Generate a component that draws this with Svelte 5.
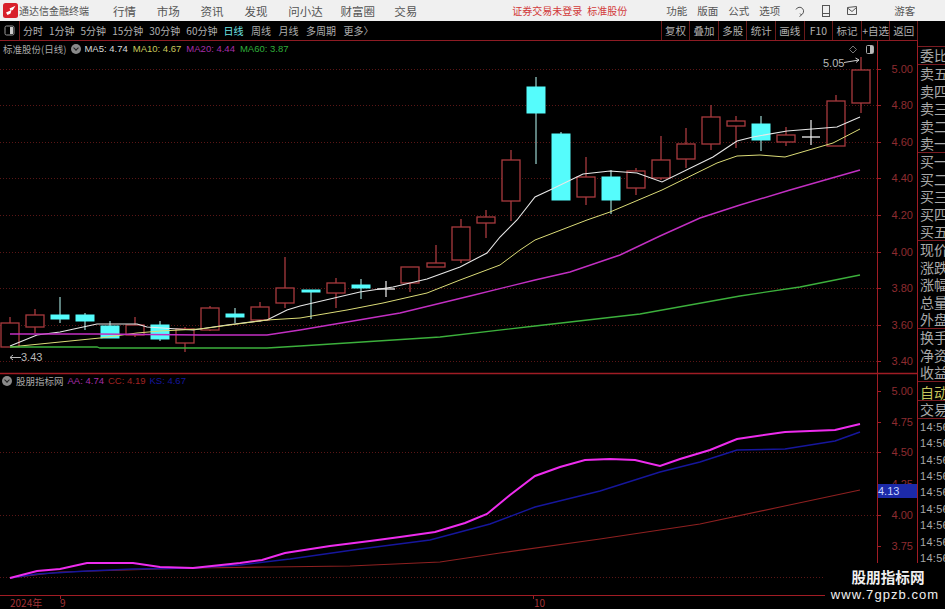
<script>
  const menu = ['行情','市场','资讯','发现','问小达','财富圈','交易'];
  const tools = ['功能','版面','公式','选项'];
  const periods = ['分时','1分钟','5分钟','15分钟','30分钟','60分钟','日线','周线','月线','多周期','更多〉'];
  const actions = ['复权','叠加','多股','统计','画线','F10','标记','+自选','返回'];

  // x, bodyTop, bodyBottom, wickTop, wickBottom, kind (r=hollow red, c=cyan, w=cross)
  const candles = [
    [10,323,347,317,347,'r'],[35,315,327,309,333,'r'],[60,315,319,297,323,'c'],[85,315,321,313,330,'c'],
    [110,326,338,321,338,'c'],[135,325,335,317,337,'r'],[160,325,339,321,341,'c'],[185,329,343,327,352,'r'],
    [210,308,330,306,331,'r'],[235,314,317,308,323,'c'],[260,307,320,302,322,'r'],[285,288,303,257,308,'r'],
    [311,290,292,290,319,'c'],[336,283,293,278,308,'r'],[361,285,288,279,299,'c'],[386,289,289,281,297,'w'],
    [410,267,283,267,292,'r'],[436,263,267,245,267,'r'],[461,227,260,219,263,'r'],[486,217,223,210,238,'r'],
    [511,160,201,150,221,'r'],[536,87,113,77,164,'c'],[561,134,200,132,200,'c'],[586,177,197,157,205,'r'],
    [611,177,200,170,214,'c'],[636,171,188,168,195,'r'],[661,160,178,136,180,'r'],[686,144,159,128,168,'r'],
    [711,117,144,105,150,'r'],[736,121,126,116,148,'r'],[761,124,140,116,151,'c'],[786,135,142,127,146,'r'],
    [811,137,137,120,145,'w'],[836,101,146,95,146,'r'],[861,70,103,57,113,'r']
  ];

  const lines = [
    ['#e8e8e8',1.1,'10,346 37,335 60,332 97,324 137,324 147,327 193,330 227,325 267,320 287,310 300,306 360,292 393,287 427,279 460,267 487,253 500,237 517,220 535,197 550,190 583,174 610,171 637,173 662,182 713,157 737,141 753,137 787,131 837,127 860,117'],
    ['#dcdc78',1,'10,347 60,342 100,338 137,333 160,331 200,329 267,320 300,318 347,310 383,303 427,293 460,280 500,265 520,250 535,240 587,220 610,212 662,190 717,163 737,156 760,155 785,157 833,143 860,129'],
    ['#c22fc2',1.4,'10,334 97,334 200,335 267,335 300,330 400,313 470,296 535,280 570,272 620,255 660,236 700,218 740,205 790,190 860,170'],
    ['#3cb03c',1.3,'10,347 97,347 100,348 267,348 300,346 440,337 535,326 640,314 740,296 800,287 860,275']
  ];

  const subLines = [
    ['#8e2020',1.2,'10,578 60,572 193,568 270,567 350,566 440,562 500,553 600,539 700,524 780,507 860,490'],
    ['#16169c',1.4,'10,578 37,574 87,571 133,569 193,568 240,565 290,559 360,549 430,540 490,524 535,507 600,491 660,472 700,462 737,450 785,449 835,441 860,432'],
    ['#ee2cee',2,'10,578 37,571 60,569 87,563 133,563 160,567 193,568 240,563 262,560 285,553 330,546 370,541 400,537 435,532 465,523 487,514 510,495 535,476 560,467 585,460 610,459 635,460 660,466 680,459 710,450 737,439 785,432 835,430 860,424']
  ];

  const grid = [69,105,142,178,215,252,288,325,361,452,515,577];
  const priceAxis = [['5.00',69],['4.80',105],['4.60',142],['4.40',178],['4.20',215],['4.00',252],['3.80',288],['3.60',325],['3.40',361]];
  const subAxis = [['5.00',391],['4.75',422],['4.50',452],['4.25',484],['4.00',515],['3.75',546]];

  const quote = [
    {t:'委比',s:1},{t:'卖五'},{t:'卖四'},{t:'卖三'},{t:'卖二'},{t:'卖一',s:1},
    {t:'买一'},{t:'买二'},{t:'买三'},{t:'买四'},{t:'买五',s:1},
    {t:'现价'},{t:'涨跌'},{t:'涨幅'},{t:'总量'},{t:'外盘',s:1},
    {t:'换手'},{t:'净资'},{t:'收益',s:1}
  ];
  const times = Array(9).fill('14:56');
</script>

<div class="page">
  <header class="top">
    <svg class="logo" viewBox="0 0 15 15" width="15" height="15">
      <rect width="15" height="15" rx="2.5" fill="#d8202a"/>
      <path d="M3 9.5 L7.5 7.5 L6.5 5.5 L12.5 2.8 L9.5 7.5 L8.8 6.6 L7.5 10.5 L4.5 12 Z" fill="#fff"/>
    </svg>
    <span class="brand">通达信金融终端</span>
    <nav class="menu">
      {#each menu as m}<span>{m}</span>{/each}
    </nav>
    <span class="notice">证券交易未登录</span>
    <span class="notice stock">标准股份</span>
    <nav class="tools">
      {#each tools as t}<span>{t}</span>{/each}
    </nav>
    <div class="icons">
      <svg viewBox="0 0 12 12" width="12" height="12"><path d="M2 4.5 A4 4 0 1 1 7 10 M5.5 11.5 L7.5 10 L6 8.5" fill="none" stroke="#555" stroke-width="1"/></svg>
      <svg viewBox="0 0 10 12" width="10" height="12"><rect x="1.5" y="0.5" width="7" height="11" fill="none" stroke="#555"/><path d="M1.5 8.5 H8.5" stroke="#555"/></svg>
      <svg viewBox="0 0 12 10" width="12" height="10"><path d="M1.5 1.5 L10.5 0.5 V8.5 H1.5 Z M1.5 2 L6 5.5 L10.5 1.5" fill="none" stroke="#555"/></svg>
    </div>
    <span class="guest">游客</span>
  </header>

  <div class="toolbar">
    <svg class="panel-ico" viewBox="0 0 11 11" width="11" height="11"><rect x="1" y="1" width="9" height="9" rx="1.5" fill="none" stroke="#999"/><rect x="6" y="2" width="3" height="7" fill="#ccc"/></svg>
    <div class="periods">
      {#each periods as p}<span class:active={p === '日线'}>{p}</span>{/each}
    </div>
    <div class="actions">
      {#each actions as a}<span>{a}</span>{/each}
    </div>
  </div>

  <main class="main">
    <div class="chart">
      <svg class="plot" viewBox="0 41 917 568" width="917" height="568">
        {#each grid as y}
          <line x1="0" x2="877" y1={y+.5} y2={y+.5} stroke="#5a1616" stroke-dasharray="1 2"/>
        {/each}

        {#each candles as [x,t,b,wt,wb,k]}
          {#if k === 'r'}
            <line x1={x} x2={x} y1={wt} y2={wb} stroke="#a83a3e" stroke-width="1.3"/>
            <rect x={x-9} y={t} width="18" height={b-t} fill="#000" stroke="#a83a3e" stroke-width="1.3"/>
          {:else if k === 'c'}
            <line x1={x} x2={x} y1={wt} y2={wb} stroke="#8fc4c0" stroke-width="1.3"/>
            <rect x={x-9.5} y={t-.5} width="19" height={b-t+1} fill="#55fcfc"/>
          {:else}
            <line x1={x} x2={x} y1={wt} y2={wb} stroke="#dcdcdc" stroke-width="1.3"/>
            <line x1={x-9} x2={x+9} y1={t} y2={t} stroke="#f0f0f0" stroke-width="1.3"/>
          {/if}
        {/each}

        {#each lines as [c,w,p]}
          <polyline points={p} fill="none" stroke={c} stroke-width={w}/>
        {/each}
        {#each subLines as [c,w,p]}
          <polyline points={p} fill="none" stroke={c} stroke-width={w}/>
        {/each}

        <text x="823" y="67" class="mark">5.05</text>
        <path d="M844 62.5 L859 60 M855.5 58 L859 60 L856 62.5" fill="none" stroke="#ccc"/>
        <path d="M853 46 L856.5 49.5 L853 53 L849.5 49.5 Z" fill="none" stroke="#777"/>
        <rect x="866.5" y="45.5" width="7" height="8" rx="1" fill="none" stroke="#aaa"/>
        <rect x="870" y="46" width="3" height="7" fill="#bbb"/>
        <path d="M21 357.5 H10 M13 355 L10 357.5 L13 360" fill="none" stroke="#bbb"/>
        <text x="21" y="361" class="mark">3.43</text>

        <line x1="877.5" x2="877.5" y1="41" y2="565" class="frame"/>
        <line x1="0" x2="917" y1="373.5" y2="373.5" class="frame strong"/>
        <line x1="0" x2="826" y1="595.5" y2="595.5" class="frame"/>

        {#each priceAxis as [l,y]}
          <line x1="877" x2="881" y1={y+.5} y2={y+.5} class="frame"/>
          <text x="913" y={y+4} class="axis">{l}</text>
        {/each}
        {#each subAxis as [l,y]}
          <line x1="877" x2="881" y1={y+.5} y2={y+.5} class="frame"/>
          <text x="913" y={y+4} class="axis">{l}</text>
        {/each}

        <rect x="878" y="484" width="39" height="14" fill="#1c2aa8"/>
        <text x="878" y="495" class="current">4.13</text>

        <text x="10" y="607" class="date">2024年</text>
        <text x="60" y="607" class="date">9</text>
        <text x="534" y="607" class="date">10</text>
        <line x1="60.5" x2="60.5" y1="595" y2="599" class="frame"/>
        <line x1="533.5" x2="533.5" y1="595" y2="599" class="frame"/>
      </svg>

      <div class="legend main-legend">
        <span class="title">标准股份(日线)</span>
        <i class="dot"></i>
        <span class="white">MA5: 4.74</span>
        <span class="yellow">MA10: 4.67</span>
        <span class="purple">MA20: 4.44</span>
        <span class="green">MA60: 3.87</span>
      </div>
      <div class="legend sub-legend">
        <i class="dot"></i>
        <span class="title">股朋指标网</span>
        <span class="purple">AA: 4.74</span>
        <span class="red">CC: 4.19</span>
        <span class="blue">KS: 4.67</span>
      </div>
    </div>

    <aside class="quote">
      {#each quote as q}
        <div class="row" class:sep={q.s}>{q.t}</div>
      {/each}
      <div class="row auto sep">自动</div>
      <div class="row sep">交易</div>
      {#each times as t}
        <div class="time">{t}</div>
      {/each}
    </aside>
  </main>

  <div class="watermark">
    <strong>股朋指标网</strong>
    <span>www.7gpzb.com</span>
  </div>
</div>

<style>
  :global(body) { margin: 0; background: #000; }
  .page {
    width: 945px; height: 609px; overflow: hidden; position: relative;
    display: flex; flex-direction: column; background: #000;
    font-family: "Noto Sans CJK SC", "Liberation Sans", sans-serif;
  }
  .top {
    height: 21px; flex: none; background: #f0f0f0; color: #555;
    display: flex; align-items: center; padding-left: 3px;
  }
  .logo { flex: none; }
  .brand { font-size: 10px; margin-left: 1px; width: 94px; color: #555; }
  .menu { display: flex; gap: 20.8px; font-size: 11.5px; }
  .menu span { white-space: nowrap; }
  .menu span:nth-child(6) { margin-left: -3px; }
  .menu span:nth-child(7) { margin-left: -1.5px; }
  .notice { color: #d23a3a; font-size: 10px; margin-left: 95px; }
  .notice.stock { margin-left: 5px; }
  .tools { display: flex; gap: 10px; font-size: 10.5px; margin-left: 39px; }
  .icons { display: flex; gap: 15px; align-items: center; margin-left: 14px; }
  .guest { font-size: 10.5px; margin-left: 36px; }

  .toolbar {
    height: 20px; flex: none; box-sizing: border-box; background: #000;
    display: flex; align-items: center; color: #b0b0b0; font-size: 10.5px;
    border-bottom: 1px solid #8e1c24; width: 918px;
  }
  .panel-ico { margin-left: 4px; flex: none; }
  .periods {
    display: flex; gap: 6px; margin-left: 4px; padding-left: 3px; border-left: 1px solid #6a1a1a;
    height: 19px; align-items: center; white-space: nowrap; font-size: 10px;
  }
  .periods span:nth-child(n+8) { margin-left: 1.5px; }
  .active { color: #6fe6e6; }
  .actions { display: flex; margin-left: auto; height: 19px; }
  .actions span {
    width: 28.6px; box-sizing: border-box; display: flex; align-items: center; justify-content: center;
    border-left: 1px solid #6a1a1a; white-space: nowrap;
  }
  .actions span:last-child { border-right: 1px solid #6a1a1a; }

  .main { flex: 1; display: flex; min-height: 0; }
  .chart { width: 917px; position: relative; flex: none; }
  .plot { display: block; }
  .plot text { font-family: "Liberation Sans", sans-serif; }
  .frame { stroke: #a01c24; stroke-width: 1; }
  .strong { stroke-width: 1.4; }
  .axis { fill: #8e2c30; font-size: 11px; text-anchor: end; }
  .mark { fill: #b8b8b8; font-size: 11px; }
  .current { fill: #c8d4ff; font-size: 11px; }
  .plot .date { fill: #a03438; font-size: 10px; font-family: "Noto Sans CJK SC", sans-serif; }

  .legend {
    position: absolute; left: 3px; display: flex; align-items: center; gap: 5px;
    font-family: "Liberation Sans", sans-serif; font-size: 9.5px; white-space: nowrap; line-height: 14px;
  }
  .legend .title { color: #a8a8a8; font-family: "Noto Sans CJK SC", sans-serif; font-size: 9.5px; }
  .main-legend { top: 1px; }
  .main-legend .dot { margin-right: -2px; }
  .sub-legend { top: 333px; left: 2px; gap: 4px; }
  .dot { width: 10px; height: 10px; border-radius: 50%; background: #8a8a8a; flex: none; position: relative; }
  .dot::after {
    content: ""; position: absolute; left: 3px; top: 2px; width: 3px; height: 3px;
    border-right: 1px solid #222; border-bottom: 1px solid #222; transform: rotate(45deg);
  }
  .white { color: #d8d8d8; }
  .yellow { color: #c8c85c; }
  .purple { color: #a52ea8; }
  .green { color: #2fae3a; }
  .red { color: #a02222; }
  .blue { color: #16169c; }

  .quote {
    flex: 1; min-width: 0; overflow: hidden; box-sizing: border-box; padding-top: 5px; height: 522px;
    border-left: 1px solid #a01c24; color: #a8a8a8; font-size: 14px; white-space: nowrap;
  }
  .row {
    height: 17.6px; line-height: 17.6px; padding-left: 2px; box-sizing: border-box;
  }
  .row:first-child { border-top: 1px solid #7a1c22; height: 19px; }
  .sep { border-bottom: 1px solid #7a1c22; }
  .auto { color: #c4c45a; margin-top: 2px; }
  .time {
    height: 16.4px; line-height: 16.4px; padding-left: 2px;
    font-family: "Liberation Sans", sans-serif; font-size: 11px; letter-spacing: 0.3px;
  }

  .watermark {
    position: absolute; right: 0; bottom: 0; width: 120px; height: 46px; background: #000;
    display: flex; flex-direction: column; align-items: center; color: #f0f0f0; padding-top: 5px; box-sizing: border-box;
  }
  .watermark strong { font-size: 14.6px; line-height: 18px; font-weight: 700; margin-left: 6px; }
  .watermark span { font-family: "Liberation Sans", sans-serif; font-size: 13px; line-height: 18px; letter-spacing: 1.05px; white-space: nowrap; }
</style>
